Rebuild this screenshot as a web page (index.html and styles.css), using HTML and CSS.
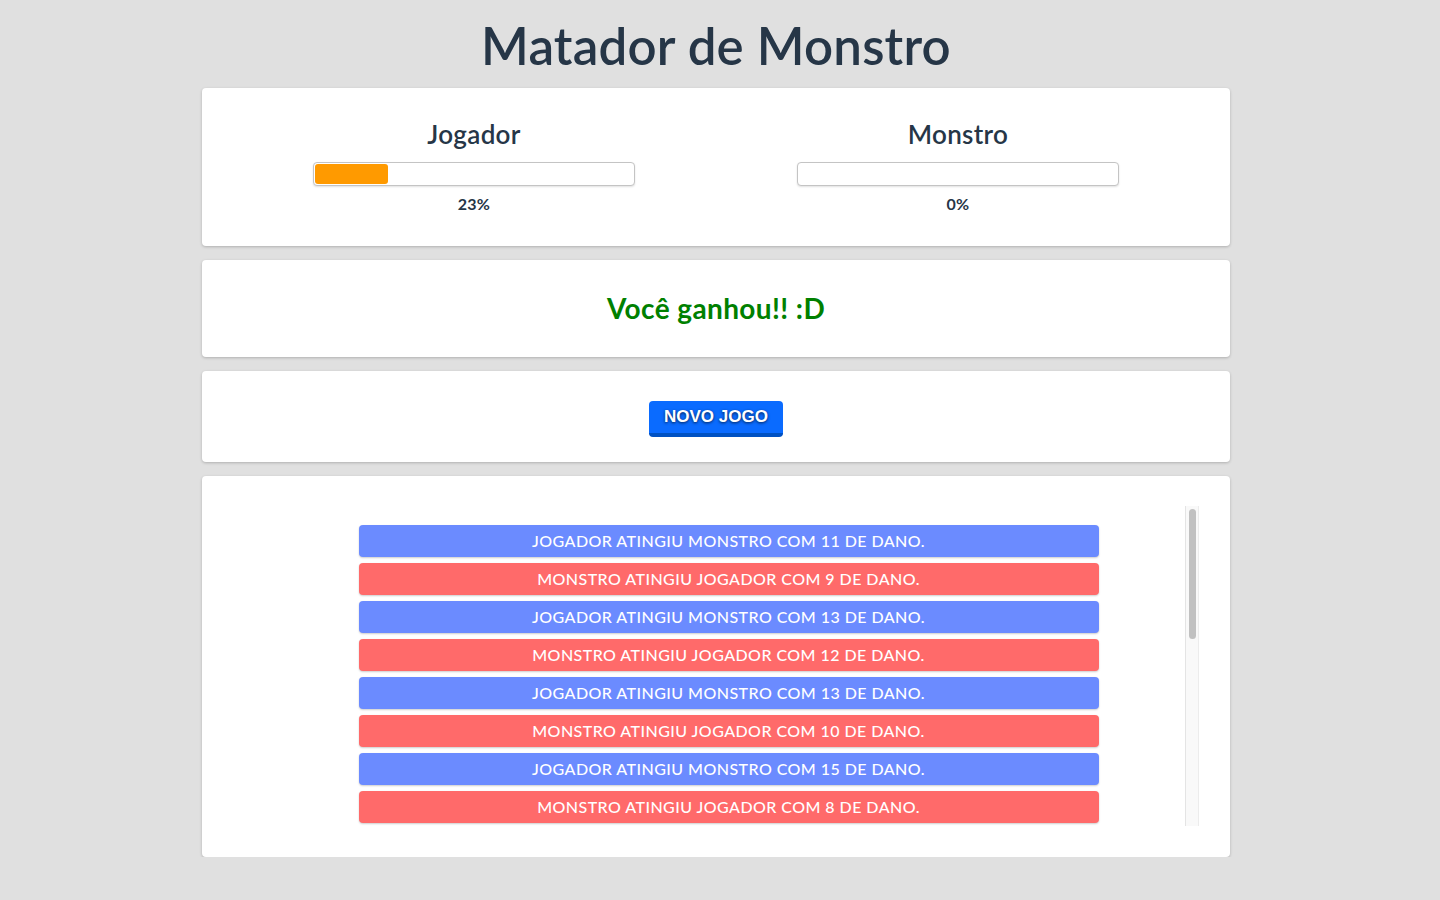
FILE: index.html
```html
<!DOCTYPE html>
<html lang="pt-BR">
<head>
<meta charset="utf-8">
<title>Matador de Monstro</title>
<link rel="stylesheet" href="styles.css">
</head>
<body>
<div class="page">
  <h1 class="title">Matador de Monstro</h1>
  <main class="app">
    <section class="panel scores">
      <div class="score">
        <h2 class="score-name">Jogador</h2>
        <div class="bar"><div class="fill" style="width:23%"></div></div>
        <div class="pct">23%</div>
      </div>
      <div class="score">
        <h2 class="score-name">Monstro</h2>
        <div class="bar"><div class="fill" style="width:0%"></div></div>
        <div class="pct">0%</div>
      </div>
    </section>
    <section class="panel result">
      <h3 class="win">Você ganhou!! :D</h3>
    </section>
    <section class="panel controls">
      <button class="btn-new" type="button">NOVO JOGO</button>
    </section>
    <section class="panel log">
      <div class="log-body">
        <ul class="log-list">
          <li class="entry player">Jogador atingiu monstro com 11 de dano.</li>
          <li class="entry monster">Monstro atingiu jogador com 9 de dano.</li>
          <li class="entry player">Jogador atingiu monstro com 13 de dano.</li>
          <li class="entry monster">Monstro atingiu jogador com 12 de dano.</li>
          <li class="entry player">Jogador atingiu monstro com 13 de dano.</li>
          <li class="entry monster">Monstro atingiu jogador com 10 de dano.</li>
          <li class="entry player">Jogador atingiu monstro com 15 de dano.</li>
          <li class="entry monster">Monstro atingiu jogador com 8 de dano.</li>
        </ul>
        <div class="scrollbar" aria-hidden="true"><div class="thumb"></div></div>
      </div>
    </section>
  </main>
</div>
</body>
</html>
```

FILE: styles.css
```css
* { box-sizing: border-box; }

html, body {
  margin: 0;
  padding: 0;
  background: #e0e0e0;
}

body {
  font-family: Lato, "Noto Sans", "Liberation Sans", sans-serif;
  color: #2c3e50;
  -webkit-font-smoothing: antialiased;
}

.page {
  padding-right: 8px;
  padding-top: 15px;
}

.title {
  margin: 0 0 12px;
  text-align: center;
  font-size: 51px;
  line-height: 61px;
  font-weight: 600;
  letter-spacing: 0.2px;
  color: #263647;
}

.app {
  width: 1028px;
  margin: 0 auto;
  display: flex;
  flex-direction: column;
  gap: 14px;
}

.panel {
  background: #fff;
  border-radius: 4px;
  box-shadow: 0 1px 3px rgba(0, 0, 0, 0.22);
}

.scores {
  display: flex;
  padding: 30px 30px 31px;
}

.score {
  flex: 1;
  display: flex;
  flex-direction: column;
  align-items: center;
}

.score-name {
  margin: 0;
  font-size: 26px;
  line-height: 32px;
  font-weight: 600;
  letter-spacing: 0.3px;
  color: #263647;
}

.bar {
  margin-top: 12px;
  width: 322px;
  height: 24px;
  padding: 1px;
  border: 1px solid #c4c4c4;
  border-radius: 4px;
  background: #fff;
  box-shadow: 0 1px 2px rgba(0, 0, 0, 0.12);
}

.fill {
  height: 100%;
  background: #ff9a00;
  border-radius: 3px;
}

.pct {
  margin-top: 7px;
  font-size: 16px;
  line-height: 22px;
  font-weight: 700;
  letter-spacing: 0.3px;
  color: #263647;
}

.result {
  padding: 30px;
  text-align: center;
}

.win {
  margin: 0;
  font-size: 28px;
  line-height: 37px;
  font-weight: 700;
  letter-spacing: 0.4px;
  color: #008000;
}

.controls {
  padding: 30px 0 25px;
  display: flex;
  justify-content: center;
}

.btn-new {
  height: 36px;
  padding: 0 15px;
  border: 0;
  border-bottom: 4px solid #0051c2;
  border-radius: 4px;
  background: #0a6bff;
  color: #fff;
  font-family: "Liberation Sans", Arial, sans-serif;
  font-weight: 700;
  font-size: 17px;
  line-height: 32px;
  text-shadow: 0 1px 3px rgba(0, 0, 0, 0.7);
  cursor: pointer;
}

.log {
  padding: 30px 31px 31px 30px;
}

.log-body {
  display: flex;
  height: 320px;
}

.log-list {
  flex: 1;
  list-style: none;
  margin: 0;
  padding: 19px 0 0 40px;
  overflow: hidden;
}

.entry {
  width: 740px;
  height: 32px;
  margin: 0 auto 6px;
  border-radius: 4px;
  text-align: center;
  text-transform: uppercase;
  color: #fff;
  font-size: 16px;
  line-height: 32px;
  font-weight: 500;
  letter-spacing: 0.45px;
  box-shadow: 0 1px 2px rgba(0, 0, 0, 0.2);
}

.entry.player { background: #6b8bff; }
.entry.monster { background: #ff6a6a; }

.scrollbar {
  flex: none;
  width: 14px;
  height: 320px;
  padding: 3px 2px 0 3px;
  background: #f9f9f9;
  border-left: 1px solid #e4e4e4;
  border-right: 1px solid #ececec;
}

.thumb {
  height: 130px;
  border-radius: 4px;
  background: #c1c1c1;
}
```
